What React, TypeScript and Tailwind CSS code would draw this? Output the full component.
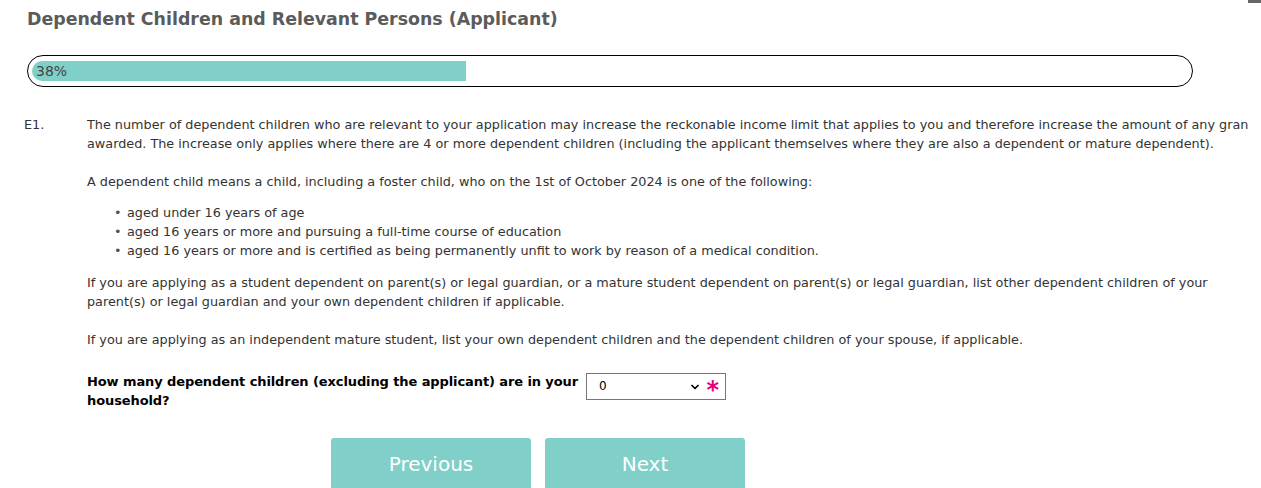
import { ChevronDown } from 'lucide-react';

const bullets = [
  'aged under 16 years of age',
  'aged 16 years or more and pursuing a full-time course of education',
  'aged 16 years or more and is certified as being permanently unfit to work by reason of a medical condition.',
];

export default function App() {
  return (
    <div className="flex w-[1261px] h-[488px] overflow-hidden bg-white font-['DejaVu_Sans',Verdana,sans-serif] text-[#333]">
      <div className="w-[1248px] shrink-0 overflow-hidden">
        <h1 className="pl-[27px] pt-[7px] text-[17.4px] leading-[24px] font-bold text-[#5b5b5b]">
          Dependent Children and Relevant Persons (Applicant)
        </h1>

        {/* progress */}
        <div className="ml-[27px] mt-[24px] w-[1166px] h-[32px] rounded-full border border-black px-[4px] py-[5px]">
          <div className="h-full w-[434px] rounded-l-full rounded-r-[3px] bg-[#80d0c9] pl-[4px] text-[14px] leading-[20px] text-[#444]">
            38%
          </div>
        </div>

        {/* E1 */}
        <div className="mt-[28px] flex text-[12.8px] leading-[19px]">
          <div className="w-[87px] shrink-0 pl-[24px]">E1.</div>
          <div className="w-[1185px] shrink-0">
            <p>
              The number of dependent children who are relevant to your application may increase the reckonable income
              limit that applies to you and therefore increase the amount of any grant awarded. The increase only applies
              where there are 4 or more dependent children (including the applicant themselves where they are also a
              dependent or mature dependent).
            </p>
            <p className="mt-[19px]">
              A dependent child means a child, including a foster child, who on the 1st of October 2024 is one of the
              following:
            </p>
            <ul className="mt-[12px] pl-[27px]">
              {bullets.map((b) => (
                <li key={b} className="flex">
                  <span className="w-[13px] shrink-0 text-[#555]">•</span>
                  <span>{b}</span>
                </li>
              ))}
            </ul>
            <p className="mt-[13px] w-[1145px]">
              If you are applying as a student dependent on parent(s) or legal guardian, or a mature student dependent on
              parent(s) or legal guardian, list other dependent children of your parent(s) or legal guardian and your own
              dependent children if applicable.
            </p>
            <p className="mt-[19px]">
              If you are applying as an independent mature student, list your own dependent children and the dependent
              children of your spouse, if applicable.
            </p>

            <div className="mt-[23px] flex items-start">
              <div className="w-[499px] text-[13px] leading-[19px] font-bold text-black tracking-[-0.1px]">
                How many dependent children (excluding the applicant) are in your household?
              </div>
              <div className="mt-[1px] flex h-[27px] w-[140px] items-center border border-[#767676] pl-[12px] pr-[6px] text-[12px] text-black">
                <span className="flex-1">0</span>
                <ChevronDown className="h-[12px] w-[12px]" strokeWidth={3.5} />
                <span className="ml-[5px] mt-[6px] text-[24px] font-bold leading-none text-[#e6007e]">*</span>
              </div>
            </div>

            <div className="mt-[28px] flex gap-[14px] pl-[244px]">
              <button className="h-[52px] w-[200px] rounded-[3px] bg-[#80d0c9] text-[20px] text-white">Previous</button>
              <button className="h-[52px] w-[200px] rounded-[3px] bg-[#80d0c9] text-[20px] text-white">Next</button>
            </div>
          </div>
        </div>
      </div>

      {/* scrollbar strip */}
      <div className="flex-1">
        <div className="ml-auto h-[3px] w-[14px] bg-[#666]" />
      </div>
    </div>
  );
}
